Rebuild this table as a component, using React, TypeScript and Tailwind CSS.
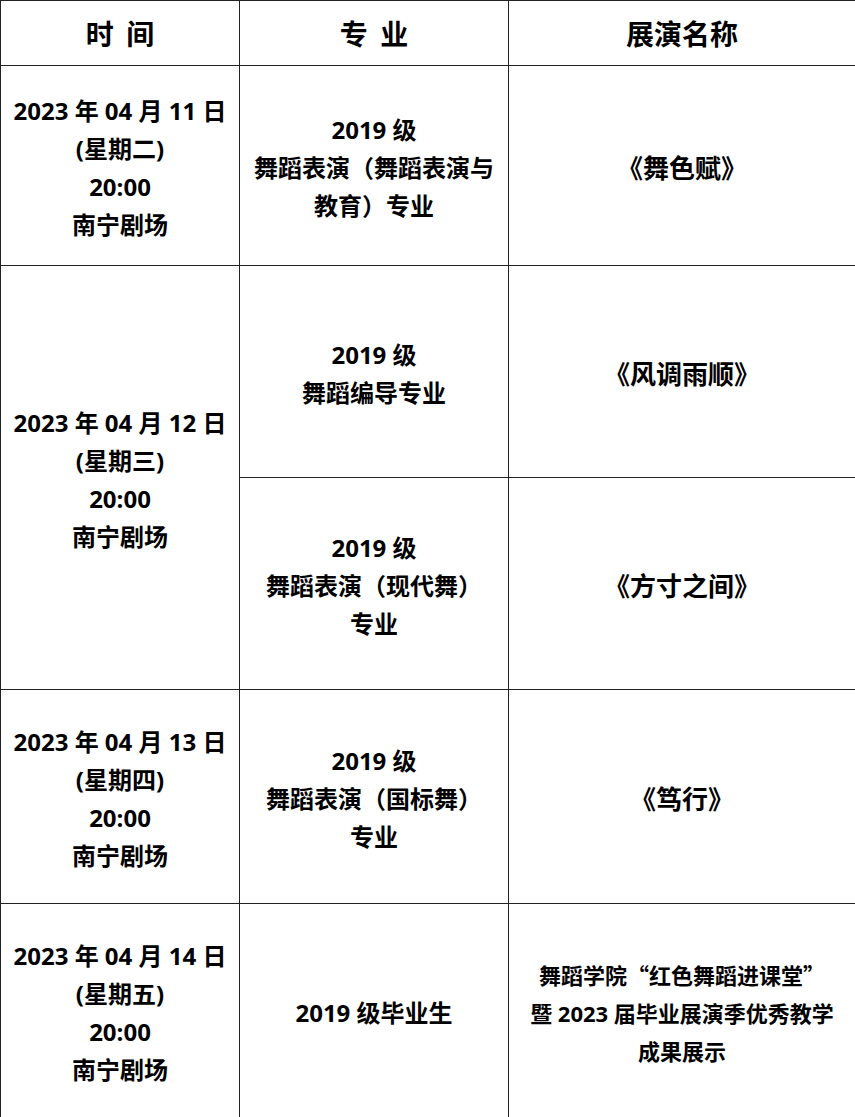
import React from "react";

const F = { fontFamily: '"Open Sans", "Noto Sans CJK SC", sans-serif' };
const CJK = { fontFamily: '"Noto Sans CJK SC", sans-serif' };

function Cell({ children, rowSpan, className = "" }: { children: React.ReactNode; rowSpan?: number; className?: string }) {
  return (
    <td rowSpan={rowSpan} className={"border border-[#222] text-center align-middle font-bold text-black " + className}>
      {children}
    </td>
  );
}

function Lines({ lines }: { lines: React.ReactNode[] }) {
  return (
    <div className="flex flex-col items-center leading-[38px] pt-[4px]">
      {lines.map((l, i) => (
        <div key={i} className="whitespace-pre">{l}</div>
      ))}
    </div>
  );
}

export default function App() {
  return (
    <div className="w-[855px] h-[1117px] bg-white" style={F}>
      <table className="border-collapse w-[855px] text-[24px] table-fixed">
        <colgroup>
          <col className="w-[239px]" />
          <col className="w-[269px]" />
          <col className="w-[347px]" />
        </colgroup>
        <tbody>
          <tr className="h-[65px]">
            <Cell className="text-[28px] font-black"><span style={CJK}>时&nbsp;&nbsp;间</span></Cell>
            <Cell className="text-[28px] font-black"><span style={CJK}>专&nbsp;&nbsp;业</span></Cell>
            <Cell className="text-[28px] font-black"><span style={CJK}>展演名称</span></Cell>
          </tr>
          <tr className="h-[200px]">
            <Cell><Lines lines={["2023 年 04 月 11 日", "(星期二)", "20:00", "南宁剧场"]} /></Cell>
            <Cell><Lines lines={["2019 级", "舞蹈表演（舞蹈表演与", "教育）专业"]} /></Cell>
            <Cell className="text-[26px]"><Lines lines={["《舞色赋》"]} /></Cell>
          </tr>
          <tr className="h-[212px]">
            <Cell rowSpan={2}><Lines lines={["2023 年 04 月 12 日", "(星期三)", "20:00", "南宁剧场"]} /></Cell>
            <Cell><Lines lines={["2019 级", "舞蹈编导专业"]} /></Cell>
            <Cell className="text-[26px]"><Lines lines={["《风调雨顺》"]} /></Cell>
          </tr>
          <tr className="h-[212px]">
            <Cell><Lines lines={["2019 级", "舞蹈表演（现代舞）", "专业"]} /></Cell>
            <Cell className="text-[26px]"><Lines lines={["《方寸之间》"]} /></Cell>
          </tr>
          <tr className="h-[214px]">
            <Cell><Lines lines={["2023 年 04 月 13 日", "(星期四)", "20:00", "南宁剧场"]} /></Cell>
            <Cell><Lines lines={["2019 级", "舞蹈表演（国标舞）", "专业"]} /></Cell>
            <Cell className="text-[26px]"><Lines lines={["《笃行》"]} /></Cell>
          </tr>
          <tr className="h-[214px]">
            <Cell><Lines lines={["2023 年 04 月 14 日", "(星期五)", "20:00", "南宁剧场"]} /></Cell>
            <Cell><Lines lines={["2019 级毕业生"]} /></Cell>
            <Cell className="text-[22px]">
              <Lines
                lines={[
                  <span style={CJK}>舞蹈学院“红色舞蹈进课堂”</span>,
                  "暨 2023 届毕业展演季优秀教学",
                  "成果展示",
                ]}
              />
            </Cell>
          </tr>
        </tbody>
      </table>
    </div>
  );
}
